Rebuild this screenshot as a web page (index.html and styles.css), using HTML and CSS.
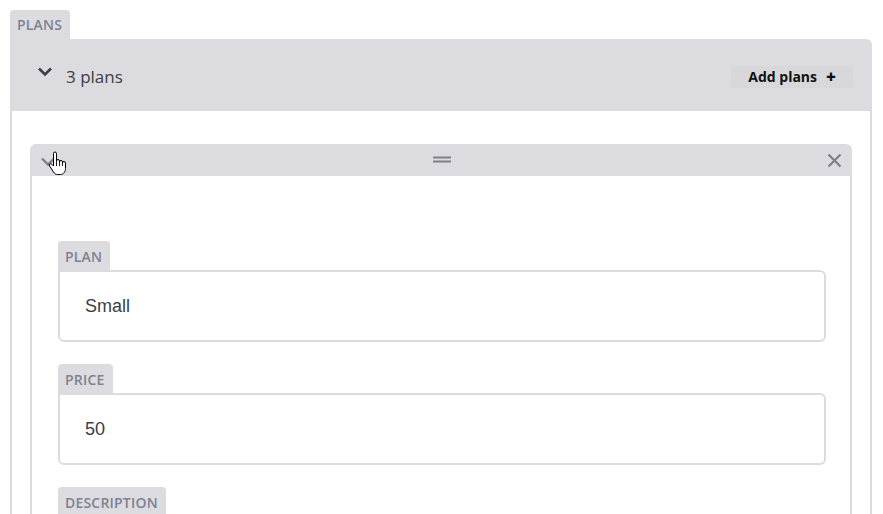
FILE: index.html
```html
<!DOCTYPE html>
<html>
<head>
<meta charset="utf-8">
<link rel="stylesheet" href="styles.css">
</head>
<body>
<div class="field">
  <div class="tab">PLANS</div>
  <div class="panel">
    <div class="panel-head">
      <div class="head-left">
        <svg class="chev" width="16" height="11" viewBox="0 0 16 11"><path d="M2 2.5l6 6 6-6" fill="none" stroke="#3a3e45" stroke-width="2.6"/></svg>
        <span class="count">3 plans</span>
      </div>
      <button class="add">Add plans <span class="plus">+</span></button>
    </div>
    <div class="panel-body">
      <div class="card">
        <div class="card-head">
          <svg class="chev-sm" width="16" height="11" viewBox="0 0 16 11"><path d="M2 2.5l6 6 6-6" fill="none" stroke="#7a808c" stroke-width="2.4"/></svg>
          <svg class="drag" width="18" height="7" viewBox="0 0 18 7"><rect x="0" y="0.5" width="18" height="2" fill="#7a808c"/><rect x="0" y="4.5" width="18" height="2" fill="#7a808c"/></svg>
          <svg class="close" width="15" height="15" viewBox="0 0 15 15"><path d="M1.5 1.5l12 12M13.5 1.5l-12 12" stroke="#7a808c" stroke-width="2.2"/></svg>
          <svg class="cursor" width="20" height="25" viewBox="0 0 20 25"><path d="M5.5 2.5a1.5 1.5 0 0 1 3 0V10a1.5 1.5 0 0 1 3 0v1a1.5 1.5 0 0 1 3 0v1a1.5 1.5 0 0 1 3 0v5.5c0 3-2 6-5 6H9.5c-2 0-3-1-4-2.5L1.6 15a1.4 1.4 0 0 1 2.2-1.8L5.5 15Z" fill="#fff" stroke="#000" stroke-width="1" stroke-linejoin="round"/><path d="M8.5 10v5M11.5 11v4M14.5 12v3" stroke="#000" stroke-width="0.9"/></svg>
        </div>
        <div class="card-body">
          <div class="tab sub">PLAN</div>
          <div class="input">Small</div>
          <div class="tab sub">PRICE</div>
          <div class="input">50</div>
          <div class="tab sub">DESCRIPTION</div>
          <div class="input"></div>
        </div>
      </div>
    </div>
  </div>
</div>
</body>
</html>
```
FILE: styles.css
```css
html, body {
  margin: 0;
  padding: 0;
  background: #fff;
  overflow: hidden;
  height: 514px;
}
body {
  padding: 10px 11px 0 10px;
  font-family: "Open Sans", "Noto Sans", sans-serif;
}
.tab {
  width: fit-content;
  background: #dcdce0;
  color: #7c8291;
  font-weight: 600;
  font-size: 14px;
  letter-spacing: 0.2px;
  height: 29px;
  line-height: 30px;
  padding: 0 8px 0 7px;
  border-radius: 4px 4px 0 0;
}
.panel-head {
  background: #dcdce0;
  height: 72px;
  border-radius: 0 6px 0 0;
  display: flex;
  align-items: center;
  justify-content: space-between;
  padding: 0 19px 0 27px;
}
.head-left {
  display: flex;
  align-items: center;
}
.chev {
  margin-top: -7px;
}
.count {
  margin-left: 13px;
  font-size: 17px;
  color: #3a3e45;
  margin-top: 3px;
}
.add {
  border: 0;
  background: #d8d8db;
  font-family: "Open Sans", "Noto Sans", sans-serif;
  font-weight: 700;
  font-size: 14px;
  color: #111;
  height: 22px;
  padding: 0 17px 0 17px;
  border-radius: 3px;
  display: flex;
  align-items: center;
  margin-top: 3px;
}
.plus {
  margin-left: 9px;
  font-size: 17px;
  font-weight: 800;
}
.panel-body {
  border: 2px solid #dcdce0;
  border-top: 0;
  padding: 33px 18px 0 18px;
  height: 500px;
}
.card-head {
  position: relative;
  background: #dcdce0;
  height: 32px;
  border-radius: 6px 6px 0 0;
  display: flex;
  align-items: center;
  justify-content: space-between;
  padding: 0 10px 0 10px;
}
.chev-sm {
  margin-top: 2px;
}
.drag {
  margin-top: -1px;
}
.cursor {
  position: absolute;
  left: 18px;
  top: 7px;
}
.card-body {
  border: 2px solid #dcdce0;
  border-top: 0;
  padding: 65px 24px 0 26px;
  height: 400px;
}
.tab.sub {
  line-height: 31px;
}
.input {
  border: 2px solid #dcdce0;
  border-radius: 0 6px 6px 6px;
  height: 68px;
  box-sizing: content-box;
  padding: 0 25px;
  display: flex;
  align-items: center;
  font-family: "Liberation Sans", Arial, sans-serif;
  font-size: 18px;
  color: #3c4048;
  margin-bottom: 22px;
}
```
